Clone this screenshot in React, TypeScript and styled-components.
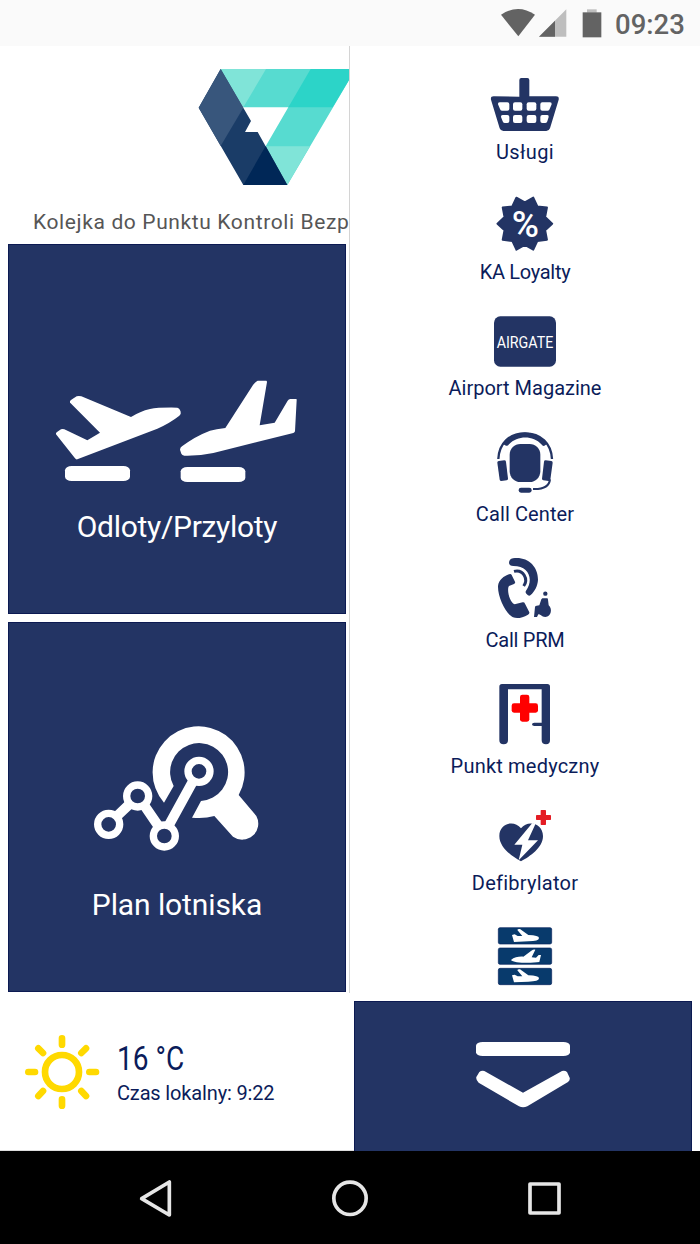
import React from "react";
import styled, { createGlobalStyle } from "styled-components";

const NAVY = "#233464";
const INK = "#0b1c5a";

const GlobalStyle = createGlobalStyle`
  * { box-sizing: border-box; }
  body { margin: 0; background: #fff; font-family: Roboto, "Liberation Sans", sans-serif; }
  svg { display: block; flex: none; }
`;

const Screen = styled.div`
  width: 700px;
  height: 1244px;
  display: flex;
  flex-direction: column;
  overflow: hidden;
  background: #fff;
`;

const StatusBar = styled.header`
  height: 46px;
  flex: none;
  display: flex;
  align-items: flex-start;
  justify-content: flex-end;
  gap: 13px;
  padding: 8px 15px 0 0;
  background: #fafafa;
`;

const Clock = styled.span`
  width: 70px;
  font-size: 27.5px;
  line-height: 33px;
  font-weight: 500;
  color: #636363;
`;

const Content = styled.main`
  height: 955px;
  flex: none;
  display: flex;
`;

const HomeColumn = styled.section`
  width: 350px;
  height: 947px;
  flex: none;
  overflow: hidden;
  border-right: 1px solid #d4d4d4;
`;

const Brand = styled.div`
  height: 198px;
  padding-top: 22px;
  overflow: hidden;
`;

const LogoBox = styled.div`
  margin-left: 198px;
  height: 118px;
`;

const QueueText = styled.div`
  margin: 22px 0 0 33px;
  font-size: 21px;
  line-height: 29px;
  letter-spacing: 0.62px;
  white-space: nowrap;
  color: #565656;
`;

const Tiles = styled.div`
  display: flex;
  flex-direction: column;
  gap: 8px;
  padding-left: 8px;
`;

const Tile = styled.div<{ $top: number; $gap: number }>`
  width: 338px;
  height: 370px;
  display: flex;
  flex-direction: column;
  align-items: center;
  gap: ${(p) => p.$gap}px;
  padding-top: ${(p) => p.$top - 1}px;
  border: 1px solid #0c1a52;
  background: ${NAVY};
`;

const TileLabel = styled.span<{ $spacing: number }>`
  font-size: 30px;
  line-height: 40px;
  letter-spacing: ${(p) => p.$spacing}px;
  color: #fff;
`;

const MenuColumn = styled.nav`
  flex: 1;
  display: flex;
  flex-direction: column;
  align-items: center;
  gap: 31px;
  padding-top: 32px;
`;

const MenuItem = styled.div`
  display: flex;
  flex-direction: column;
  align-items: center;
  gap: 8px;
`;

const MenuLabel = styled.span<{ $spacing: number }>`
  font-size: 20px;
  line-height: 26px;
  letter-spacing: ${(p) => p.$spacing}px;
  white-space: nowrap;
  color: ${INK};
`;

const Footer = styled.section`
  height: 150px;
  flex: none;
  display: flex;
`;

const Weather = styled.div`
  width: 354px;
  display: flex;
  align-items: flex-start;
  gap: 17px;
  padding: 34px 0 0 25px;
  border-bottom: 1px solid #ddd;
`;

const WeatherText = styled.div`
  display: flex;
  flex-direction: column;
  padding-top: 5px;
  color: ${INK};
`;

const Temperature = styled.span`
  font-size: 33px;
  line-height: 38px;
  transform: scaleX(0.85);
  transform-origin: left;
`;

const LocalTime = styled.span`
  font-size: 20px;
  line-height: 30px;
  letter-spacing: -0.15px;
  white-space: nowrap;
`;

const DrawerButton = styled.div`
  width: 338px;
  display: flex;
  justify-content: center;
  padding-top: 39px;
  border: 1px solid #0c1a52;
  border-bottom: 0;
  background: ${NAVY};
`;

const NavBar = styled.footer`
  flex: 1;
  display: flex;
  align-items: center;
  justify-content: center;
  gap: 155px;
  background: #000;
`;

const StatusIcons = () => (
  <svg width="102" height="30" viewBox="60 24 306 90" fill="#636363">
    <path d="M63 44Q114 10 165 44L115 109Z" />
    <path d="M177 110L259 28V110Z" fill="#bebebe" />
    <path d="M177 110L225 62V110Z" />
    <path d="M321 28H350V38H321Z" fill="#bebebe" />
    <path d="M308 37H364V112H308Z" />
  </svg>
);

const Logo = () => (
  <svg width="153" height="118" viewBox="54 54 459 354">
    <path d="M122 57H527L322 405L257 289L325 172H190Z" fill="#57dbd0" />
    <path d="M122 57H258L190 172Z" fill="#80e4d8" />
    <path d="M392 57H527L458 172H325Z" fill="#2cd4c8" />
    <path d="M257 289H390L322 405Z" fill="#80e4d8" />
    <path d="M122 57L213 213L195 246H233L322 405H190L56 173Z" fill="#1a3c67" />
    <path d="M122 57L190 173L122 288L56 173Z" fill="#38567c" />
    <path d="M257 288L322 405H190Z" fill="#002757" />
  </svg>
);

const FlightsIcon = () => (
  <svg width="246" height="104" viewBox="42 60 738 312" fill="#fff">
    <path d="M90 128Q88 122 94 119L110 109Q116 107 124 109L273 171Q300 154 330 147Q355 142 412 143Q419 144 422 155Q424 162 418 167Q390 189 352 206L112 298Q108 299 105 295L48 223Q47 220 50 217L63 208Q67 206 73 208L142 241L180 218L92 130Z" />
    <path d="M420 269Q420 263 426 259Q465 229 510 212Q528 207 556 204L639 75Q646 65 653 62H679Q681 63 681 66L659 196L704 188L743 122Q746 117 751 117H768Q771 117 770 121L765 214Q764 218 760 219L520 279Q480 288 433 287Q426 286 424 281Z" />
    <rect x="75" y="318" width="195" height="45" rx="20" ry="13" />
    <rect x="422" y="321" width="194" height="45" rx="20" ry="13" />
  </svg>
);

const MapIcon = () => (
  <svg width="168" height="127" viewBox="39 45 504 381" fill="none" stroke="#fff">
    <path
      d="M252 278A138 138 0 1 1 476 255L529 318A48 48 0 0 1 459 380L403 318Q372 327 336 323L363 273A87 87 0 1 0 281 228Z"
      fill="#fff"
      stroke="none"
    />
    <path d="M108 321L151 280M190 282L238 352M263 352L342 208" strokeWidth="30" />
    <circle cx="86" cy="343" r="33" strokeWidth="22" fill="#233464" />
    <circle cx="173" cy="258" r="33" strokeWidth="22" fill="#233464" />
    <circle cx="253" cy="378" r="33" strokeWidth="22" fill="#233464" />
    <circle cx="357" cy="184" r="33" strokeWidth="22" fill="#233464" />
  </svg>
);

const BasketIcon = () => (
  <svg width="70" height="53" viewBox="30 234 210 159">
    <path
      fill={NAVY}
      d="M118 290V240Q118 234 124 234H142Q148 234 148 240V289H228Q238 289 236 299L210 385Q207 393 199 393H70Q62 393 59 385L33 299Q31 289 41 289Z"
    />
    <g fill="#fff">
      <path d="M59 307H82Q88 307 88 313V326Q88 332 82 332H66Q61 332 60 327L54 313Q53 307 59 307Z" />
      <rect x="99" y="307" width="28" height="25" rx="6" />
      <rect x="140" y="307" width="29" height="25" rx="6" />
      <path d="M187 307H210Q216 307 215 313L209 327Q208 332 203 332H187Q181 332 181 326V313Q181 307 187 307Z" />
      <path d="M68 345H82Q88 345 88 351V363Q88 369 82 369H74Q69 369 68 364L63 351Q62 345 68 345Z" />
      <rect x="99" y="345" width="28" height="24" rx="6" />
      <rect x="140" y="345" width="29" height="24" rx="6" />
      <path d="M187 345H202Q207 345 206 351L202 364Q201 369 196 369H187Q181 369 181 363V351Q181 345 187 345Z" />
    </g>
  </svg>
);

const starPoints = Array.from({ length: 20 }, (_, i) => {
  const r = i % 2 === 0 ? 82 : 64;
  const a = (i * Math.PI) / 10;
  return `${(254.5 + r * Math.cos(a)).toFixed(1)},${(131 + r * Math.sin(a)).toFixed(1)}`;
}).join(" ");

const LoyaltyIcon = () => (
  <svg width="58" height="55" viewBox="168 48 174 165">
    <polygon points={starPoints} fill={NAVY} stroke={NAVY} strokeWidth="6" strokeLinejoin="round" />
    <text x="256" y="172" fontSize="111" fontWeight="500" textAnchor="middle" fill="#fff">%</text>
  </svg>
);

const MagazineIcon = () => (
  <svg width="62" height="51" viewBox="162 408 186 153">
    <rect x="162" y="409" width="186" height="151" rx="19" fill={NAVY} />
    <text x="170" y="503" fontSize="50" textLength="170" lengthAdjust="spacingAndGlyphs" fill="#fff">AIRGATE</text>
  </svg>
);

const HeadsetIcon = () => (
  <svg width="60" height="61" viewBox="165 36 180 183" fill={NAVY}>
    <path d="M175 117C177 70 208 40 255 40C302 40 334 70 336 117" fill="none" stroke={NAVY} strokeWidth="7" />
    <path d="M189 72C222 26 288 26 321 72L312 78Q308 79 304 73C280 46 232 46 207 73Q203 79 198 77Z" />
    <rect x="209" y="72" width="92" height="114" rx="32" />
    <path d="M176 123L193 121Q197 121 198 125L204 176Q204 180 200 181L184 183Q180 183 179 179L172 128Q172 124 176 123Z" />
    <path d="M334 123L317 121Q312 121 312 125L306 176Q306 180 310 181L326 183Q330 183 331 179L338 128Q338 124 334 123Z" />
    <path d="M330 178C328 199 309 208 279 207" fill="none" stroke={NAVY} strokeWidth="6" />
    <rect x="236" y="203" width="39" height="15" rx="7" />
  </svg>
);

const AssistanceIcon = () => (
  <svg width="60" height="61" viewBox="165 414 180 183" fill={NAVY}>
    <path d="M219 415C262 409 294 438 294 479C293 498 284 514 272 525Q268 529 264 526L259 521Q255 517 258 512C282 478 267 438 220 438Q208 438 207 429Q207 417 219 415Z" />
    <path d="M222 454C250 447 266 477 251 498" fill="none" stroke={NAVY} strokeWidth="9" />
    <path d="M207 463Q213 460 215 465L225 485Q227 490 222 492L207 498C200 507 207 545 224 553L248 547Q253 546 255 551L268 577Q269 582 264 584C246 595 230 596 219 592C198 582 173 532 174 498C176 480 192 468 207 463Z" />
    <circle cx="316" cy="521" r="6.500" />
    <path d="M307 535H321Q324 535 324 539L326 556C338 566 334 590 316 591C304 591 303 583 295 583L291 591H282L285 561Q286 557 290 557L298 556L304 538Z" />
  </svg>
);

const MedicalIcon = () => (
  <svg width="60" height="61" viewBox="165 41 180 183">
    <path
      fill={NAVY}
      d="M178 49Q178 41 186 41H322Q330 41 330 49V210Q330 222 318 222Q305 222 305 210V167H283Q276 167 276 162T283 157H305V57H204V210Q204 222 191 222Q178 222 178 210Z"
    />
    <rect x="240" y="73" width="28" height="81" rx="7" fill="#f00" />
    <rect x="215" y="99" width="79" height="28" rx="7" fill="#f00" />
  </svg>
);

const DefibrillatorIcon = () => (
  <svg width="60" height="52" viewBox="165 420 180 156">
    <path d="M243 574C216 559 178 533 178 498C178 460 222 448 243 475C263 448 309 460 309 498C309 533 270 559 243 574Z" fill={NAVY} />
    <path d="M277 459L223 524H247L236 571L294 511H264L286 463Z" fill="#fff" />
    <rect x="302" y="420" width="16" height="45" rx="2" fill="#e41c24" />
    <rect x="288" y="435" width="45" height="15" rx="2" fill="#e41c24" />
  </svg>
);

const departing = "M216 105L224 103L233 108L247 108L232 90Q233 86 240 87L265 105Q297 106 297 114Q297 124 265 124L222 126Z";
const arriving = "M213 180C223 171 238 169 250 170L274 152Q280 148 286 149L275 172L288 173L296 165L303 165L298 186C275 190 220 190 213 180Z";

const BoardIcon = () => (
  <svg width="56" height="59" viewBox="171 81 168 177">
    <g fill="#083a6c" stroke="#06215c" strokeWidth="2">
      <rect x="175" y="83" width="160" height="49" rx="5" />
      <rect x="175" y="144" width="160" height="49" rx="5" />
      <rect x="175" y="205" width="160" height="49" rx="5" />
    </g>
    <g fill="#fff">
      <path d={departing} />
      <path d={arriving} />
      <path d={departing} transform="translate(0 121)" />
    </g>
  </svg>
);

const SunIcon = () => (
  <svg width="75" height="75" viewBox="75 165 225 225" fill="none" stroke="#ffd900" strokeWidth="20" strokeLinecap="round">
    <circle cx="186" cy="276" r="51" />
    <path d="M186 175V194M186 358V377M85 276H105M268 276H288M115 205L129 219M258 205L244 219M115 348L129 333M258 348L244 333" />
  </svg>
);

const CollapseIcon = () => (
  <svg width="96" height="68" viewBox="105 424 288 204" fill="#fff">
    <rect x="108" y="427" width="282" height="42" rx="20" ry="11" />
    <path d="M109 532L118 517Q124 512 133 514L249 579L366 514Q375 512 381 517L389 534Q391 541 384 547L262 620Q249 626 237 620L116 549Q107 541 109 532Z" />
  </svg>
);

const menu = [
  { label: "Usługi", icon: <BasketIcon />, spacing: 0.4 },
  { label: "KA Loyalty", icon: <LoyaltyIcon />, spacing: -0.3 },
  { label: "Airport Magazine", icon: <MagazineIcon />, spacing: 0 },
  { label: "Call Center", icon: <HeadsetIcon />, spacing: 0.1 },
  { label: "Call PRM", icon: <AssistanceIcon />, spacing: -0.25 },
  { label: "Punkt medyczny", icon: <MedicalIcon />, spacing: 0.2 },
  { label: "Defibrylator", icon: <DefibrillatorIcon />, spacing: 0.25 },
];

export default function App() {
  return (
    <Screen>
      <GlobalStyle />
      <StatusBar>
        <StatusIcons />
        <Clock>09:23</Clock>
      </StatusBar>
      <Content>
        <HomeColumn>
          <Brand>
            <LogoBox>
              <Logo />
            </LogoBox>
            <QueueText>Kolejka do Punktu Kontroli Bezp</QueueText>
          </Brand>
          <Tiles>
            <Tile $top={136} $gap={23}>
              <FlightsIcon />
              <TileLabel $spacing={-0.3}>Odloty/Przyloty</TileLabel>
            </Tile>
            <Tile $top={103} $gap={33}>
              <MapIcon />
              <TileLabel $spacing={-0.1}>Plan lotniska</TileLabel>
            </Tile>
          </Tiles>
        </HomeColumn>
        <MenuColumn>
          {menu.map((m) => (
            <MenuItem key={m.label}>
              {m.icon}
              <MenuLabel $spacing={m.spacing}>{m.label}</MenuLabel>
            </MenuItem>
          ))}
          <BoardIcon />
        </MenuColumn>
      </Content>
      <Footer>
        <Weather>
          <SunIcon />
          <WeatherText>
            <Temperature>16 °C</Temperature>
            <LocalTime>Czas lokalny: 9:22</LocalTime>
          </WeatherText>
        </Weather>
        <DrawerButton>
          <CollapseIcon />
        </DrawerButton>
      </Footer>
      <NavBar>
        <svg width="40" height="40" viewBox="105 111 120 120" fill="none" stroke="#e6e6e6" strokeWidth="11" strokeLinejoin="round">
          <path d="M125 173L208 123V222Z" />
        </svg>
        <svg width="40" height="40" viewBox="690 111 120 120" fill="none" stroke="#e6e6e6" strokeWidth="11">
          <circle cx="750" cy="172" r="48.500" />
        </svg>
        <svg width="40" height="40" viewBox="1275 111 120 120" fill="none" stroke="#e6e6e6" strokeWidth="11" strokeLinejoin="round">
          <rect x="1290" y="129" width="87" height="87" />
        </svg>
      </NavBar>
    </Screen>
  );
}
